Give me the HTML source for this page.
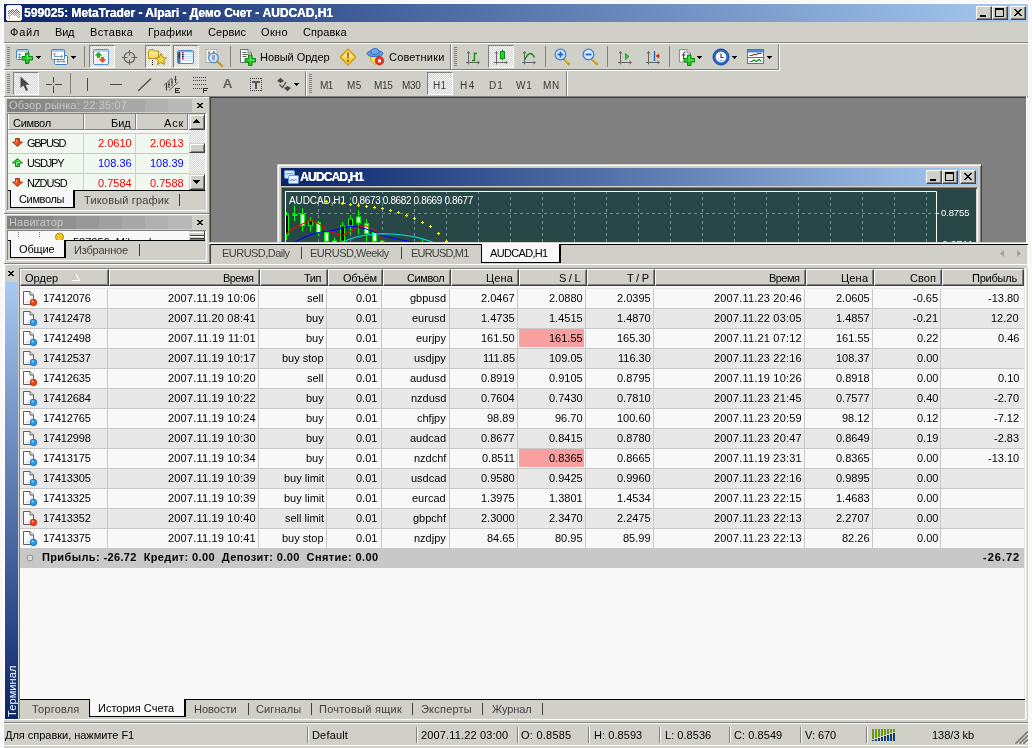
<!DOCTYPE html>
<html>
<head>
<meta charset="utf-8">
<title>MetaTrader</title>
<style>
*{box-sizing:border-box;margin:0;padding:0}
html,body{width:1032px;height:748px;overflow:hidden;background:#f8f8f8}
body{font-family:"Liberation Sans",sans-serif;font-size:11px;color:#000;position:relative}
.t{will-change:transform}
.a{position:absolute}
.t{position:absolute;white-space:pre;line-height:13px;height:13px}
.cb{position:absolute;width:16px;height:14px;background:#d0d0c8;border:1px solid;border-color:#fff #404040 #404040 #fff;box-shadow:inset -1px -1px 0 #808080}
.chk{background:repeating-conic-gradient(#fff 0% 25%,#d0d0c8 0% 50%) 0 0/2px 2px;border:1px solid;border-color:#808080 #fff #fff #808080}
.hd{position:absolute;height:16px;background:#d0d0c8;border:1px solid;border-color:#fff #404040 #404040 #fff;box-shadow:inset -1px -1px 0 #808080}
.g{color:#404040}

</style>
</head>
<body>
<div class="a " style="left:3px;top:3px;width:1025px;height:745px;background:#d0d0c8;border-left:1px solid #fff;border-top:1px solid #fff"></div>
<div class="a " style="left:4px;top:4px;width:1024px;height:18px;background:linear-gradient(90deg,#0a246a 0%,#a6caf0 100%)"></div>
<svg class="a" style="left:6px;top:5px" width="16" height="16" viewBox="0 0 16 16" shape-rendering="crispEdges"><rect x="0.500" y="0.500" width="15" height="15" rx="2" fill="#fbfaf6" stroke="#ece8dc"/><rect x="6" y="4" width="1" height="1" fill="#f02020"/><rect x="10" y="4" width="1" height="1" fill="#f02020"/><rect x="3" y="5" width="1" height="1" fill="#f02828"/><rect x="5" y="5" width="1" height="1" fill="#f02828"/><rect x="7" y="5" width="1" height="1" fill="#f02828"/><rect x="9" y="5" width="1" height="1" fill="#f02828"/><rect x="11" y="5" width="1" height="1" fill="#f02828"/><rect x="2" y="6" width="1" height="1" fill="#e83820"/><rect x="4" y="6" width="1" height="1" fill="#e83820"/><rect x="6" y="6" width="1" height="1" fill="#e83820"/><rect x="8" y="6" width="1" height="1" fill="#e83820"/><rect x="10" y="6" width="1" height="1" fill="#e83820"/><rect x="12" y="6" width="1" height="1" fill="#e83820"/><rect x="3" y="7" width="1" height="1" fill="#d05020"/><rect x="5" y="7" width="1" height="1" fill="#d05020"/><rect x="7" y="7" width="1" height="1" fill="#d05020"/><rect x="9" y="7" width="1" height="1" fill="#d05020"/><rect x="11" y="7" width="1" height="1" fill="#d05020"/><rect x="13" y="7" width="1" height="1" fill="#d05020"/><rect x="2" y="8" width="1" height="1" fill="#c87020"/><rect x="4" y="8" width="1" height="1" fill="#c87020"/><rect x="6" y="8" width="1" height="1" fill="#c87020"/><rect x="8" y="8" width="1" height="1" fill="#c87020"/><rect x="10" y="8" width="1" height="1" fill="#c87020"/><rect x="12" y="8" width="1" height="1" fill="#c87020"/><rect x="3" y="9" width="1" height="1" fill="#c89020"/><rect x="5" y="9" width="1" height="1" fill="#c89020"/><rect x="7" y="9" width="1" height="1" fill="#c89020"/><rect x="9" y="9" width="1" height="1" fill="#c89020"/><rect x="11" y="9" width="1" height="1" fill="#c89020"/><rect x="13" y="9" width="1" height="1" fill="#c89020"/><rect x="2" y="10" width="1" height="1" fill="#c0a020"/><rect x="4" y="10" width="1" height="1" fill="#c0a020"/><rect x="8" y="10" width="1" height="1" fill="#c0a020"/><rect x="10" y="10" width="1" height="1" fill="#c0a020"/><rect x="12" y="10" width="1" height="1" fill="#c0a020"/><rect x="3" y="11" width="1" height="1" fill="#80c030"/><rect x="11" y="11" width="1" height="1" fill="#80c030"/><rect x="13" y="11" width="1" height="1" fill="#80c030"/><rect x="12" y="12" width="1" height="1" fill="#70c030"/><rect x="3" y="13" width="1" height="1" fill="#70c030"/></svg>
<div class="t " style="left:23.5px;top:6px;letter-spacing:-0.024px;font-size:12px;font-weight:bold;color:#fff;line-height:14px;height:14px;text-shadow:.35px 0 0 #fff">599025: MetaTrader - Alpari - Демо Счет - AUDCAD,H1</div>
<div class="a cb" style="left:976px;top:6px;width:16px;height:14px;"></div>
<div class="a " style="left:980px;top:15px;width:6px;height:2px;background:#000"></div>
<div class="a cb" style="left:992px;top:6px;width:16px;height:14px;"></div>
<div class="a " style="left:995px;top:8px;width:9px;height:9px;border:1px solid #000;border-top:2px solid #000"></div>
<div class="a cb" style="left:1010px;top:6px;width:16px;height:14px;"></div>
<svg class="a" style="left:1014px;top:9px" width="8" height="7" viewBox="0 0 8 7" shape-rendering="crispEdges"><path d="M0 0H2L4 2.5L6 0H8L5 3.5L8 7H6L4 4.5L2 7H0L3 3.5Z" fill="#000"/></svg>
<div class="t " style="left:10.4px;top:26px;letter-spacing:0.819px;">Файл</div>
<div class="t " style="left:55.1px;top:26px;letter-spacing:-0.200px;">Вид</div>
<div class="t " style="left:90.1px;top:26px;letter-spacing:0.319px;">Вставка</div>
<div class="t " style="left:148.4px;top:26px;letter-spacing:0.129px;">Графики</div>
<div class="t " style="left:207.9px;top:26px;letter-spacing:0.066px;">Сервис</div>
<div class="t " style="left:261.1px;top:26px;letter-spacing:0.346px;">Окно</div>
<div class="t " style="left:303.0px;top:26px;letter-spacing:0.075px;">Справка</div>
<div class="a" style="left:4px;top:42px;width:1024px;height:1px;background:#808080"></div>
<div class="a" style="left:4px;top:43px;width:1024px;height:1px;background:#fff"></div>
<div class="a" style="left:4px;top:69px;width:775px;height:1px;background:#808080"></div>
<div class="a" style="left:4px;top:70px;width:776px;height:1px;background:#fff"></div>
<div class="a" style="left:4px;top:44px;width:1px;height:25px;background:#fff"></div>
<div class="a" style="left:450px;top:44px;width:1px;height:25px;background:#808080"></div>
<div class="a" style="left:451px;top:44px;width:1px;height:25px;background:#fff"></div>
<div class="a" style="left:778px;top:44px;width:1px;height:26px;background:#808080"></div>
<div class="a" style="left:779px;top:44px;width:1px;height:27px;background:#fff"></div>
<div class="a" style="left:4px;top:71px;width:1px;height:25px;background:#fff"></div>
<div class="a" style="left:305px;top:71px;width:1px;height:25px;background:#808080"></div>
<div class="a" style="left:306px;top:71px;width:1px;height:25px;background:#fff"></div>
<div class="a" style="left:566px;top:71px;width:1px;height:25px;background:#808080"></div>
<div class="a" style="left:567px;top:71px;width:1px;height:25px;background:#fff"></div>
<div class="a" style="left:4px;top:96px;width:1024px;height:1px;background:#808080"></div>
<div class="a" style="left:4px;top:97px;width:205px;height:1px;background:#fff"></div>
<div class="a " style="left:7px;top:47px;width:3px;height:1px;background:#808080"></div>
<div class="a " style="left:7px;top:49px;width:3px;height:1px;background:#808080"></div>
<div class="a " style="left:7px;top:51px;width:3px;height:1px;background:#808080"></div>
<div class="a " style="left:7px;top:53px;width:3px;height:1px;background:#808080"></div>
<div class="a " style="left:7px;top:55px;width:3px;height:1px;background:#808080"></div>
<div class="a " style="left:7px;top:57px;width:3px;height:1px;background:#808080"></div>
<div class="a " style="left:7px;top:59px;width:3px;height:1px;background:#808080"></div>
<div class="a " style="left:7px;top:61px;width:3px;height:1px;background:#808080"></div>
<div class="a " style="left:7px;top:63px;width:3px;height:1px;background:#808080"></div>
<div class="a " style="left:7px;top:65px;width:3px;height:1px;background:#808080"></div>
<div class="a " style="left:454px;top:47px;width:3px;height:1px;background:#808080"></div>
<div class="a " style="left:454px;top:49px;width:3px;height:1px;background:#808080"></div>
<div class="a " style="left:454px;top:51px;width:3px;height:1px;background:#808080"></div>
<div class="a " style="left:454px;top:53px;width:3px;height:1px;background:#808080"></div>
<div class="a " style="left:454px;top:55px;width:3px;height:1px;background:#808080"></div>
<div class="a " style="left:454px;top:57px;width:3px;height:1px;background:#808080"></div>
<div class="a " style="left:454px;top:59px;width:3px;height:1px;background:#808080"></div>
<div class="a " style="left:454px;top:61px;width:3px;height:1px;background:#808080"></div>
<div class="a " style="left:454px;top:63px;width:3px;height:1px;background:#808080"></div>
<div class="a " style="left:454px;top:65px;width:3px;height:1px;background:#808080"></div>
<div class="a " style="left:7px;top:74px;width:3px;height:1px;background:#808080"></div>
<div class="a " style="left:7px;top:76px;width:3px;height:1px;background:#808080"></div>
<div class="a " style="left:7px;top:78px;width:3px;height:1px;background:#808080"></div>
<div class="a " style="left:7px;top:80px;width:3px;height:1px;background:#808080"></div>
<div class="a " style="left:7px;top:82px;width:3px;height:1px;background:#808080"></div>
<div class="a " style="left:7px;top:84px;width:3px;height:1px;background:#808080"></div>
<div class="a " style="left:7px;top:86px;width:3px;height:1px;background:#808080"></div>
<div class="a " style="left:7px;top:88px;width:3px;height:1px;background:#808080"></div>
<div class="a " style="left:7px;top:90px;width:3px;height:1px;background:#808080"></div>
<div class="a " style="left:7px;top:92px;width:3px;height:1px;background:#808080"></div>
<div class="a " style="left:309px;top:74px;width:3px;height:1px;background:#808080"></div>
<div class="a " style="left:309px;top:76px;width:3px;height:1px;background:#808080"></div>
<div class="a " style="left:309px;top:78px;width:3px;height:1px;background:#808080"></div>
<div class="a " style="left:309px;top:80px;width:3px;height:1px;background:#808080"></div>
<div class="a " style="left:309px;top:82px;width:3px;height:1px;background:#808080"></div>
<div class="a " style="left:309px;top:84px;width:3px;height:1px;background:#808080"></div>
<div class="a " style="left:309px;top:86px;width:3px;height:1px;background:#808080"></div>
<div class="a " style="left:309px;top:88px;width:3px;height:1px;background:#808080"></div>
<div class="a " style="left:309px;top:90px;width:3px;height:1px;background:#808080"></div>
<div class="a " style="left:309px;top:92px;width:3px;height:1px;background:#808080"></div>
<svg class="a" style="left:15px;top:48px" width="20" height="18" viewBox="0 0 20 18" ><rect x="1.5" y="1.5" width="12" height="10" rx="1.2" fill="#fff" stroke="#3b82c8"/><rect x="2" y="2" width="11" height="2" fill="#a8ccf0"/>
<path d="M4.500 5.500V10.500M3 7L4.500 5.500L6 7M3 9L4.500 10.500L6 9" stroke="#7a98b8" fill="none"/><path d="M4.500 1H8V4.500H11.500V8H8V11.500H4.500V8H1V4.500H4.500Z" transform="translate(6,4)" fill="#28c828" stroke="#0a8a0a"/><path d="M5.500 2.500H7V5.500H10.500V7H5.500Z" transform="translate(6,4)" fill="#7df07d" opacity=".6"/></svg>
<svg class="a" style="left:36px;top:56px" width="5" height="3" viewBox="0 0 5 3" shape-rendering="crispEdges"><path d="M0 0H5V1H4V2H3V3H2V2H1V1H0Z" fill="#000"/></svg>
<svg class="a" style="left:50px;top:48px" width="20" height="18" viewBox="0 0 20 18" ><rect x="4.5" y="7.5" width="13" height="9" rx="1.2" fill="#fff" stroke="#3b82c8"/><path d="M7 13.5H15M7 13.5l1.5-1.5M7 13.5l1.5 1.5M15 13.5l-1.5-1.5M15 13.5l-1.5 1.5" stroke="#7a98b8" fill="none"/>
<rect x="1.5" y="1.5" width="13" height="10" rx="1.2" fill="#fff" stroke="#3b82c8"/><rect x="2" y="2" width="12" height="2" fill="#a8ccf0"/>
<path d="M4.500 5V9.5M3 6.5L4.5 5L6 6.500M4 8.500H12.500M11 7L12.500 8.500L11 10" stroke="#7a98b8" fill="none"/></svg>
<svg class="a" style="left:71px;top:56px" width="5" height="3" viewBox="0 0 5 3" shape-rendering="crispEdges"><path d="M0 0H5V1H4V2H3V3H2V2H1V1H0Z" fill="#000"/></svg>
<div class="a" style="left:84px;top:46px;width:1px;height:21px;background:#808080"></div>
<div class="a chk" style="left:89px;top:45px;width:26px;height:23px;"></div>
<svg class="a" style="left:93px;top:49px" width="17" height="16" viewBox="0 0 17 16" ><rect x="0.5" y="0.5" width="15" height="15" rx="1.5" fill="#f8f8f8" stroke="#4a90e0"/><rect x="1" y="1" width="14" height="2" fill="#b8d4f4"/>
<path d="M10 5.500H14M10 7.500H14M2 10.500H6M2 12.500H6" stroke="#e4e4e4"/>
<path d="M5.500 3.200L8.700 6.300H6.800V8.500H4.200V6.300H2.300Z" fill="#20b020" stroke="#108010" stroke-width=".5"/>
<path d="M9.500 13.600L6.300 10.500H8.200V8.300H10.800V10.500H12.700Z" fill="#f05020" stroke="#c03010" stroke-width=".5"/></svg>
<svg class="a" style="left:121px;top:49px" width="18" height="17" viewBox="0 0 18 17" ><circle cx="8.5" cy="8.5" r="5.300" fill="none" stroke="#606060" stroke-width="1.100"/><path d="M8.500 1V6.500M8.500 10.500V16M1 8.500H6.500M10.500 8.500H16.500" stroke="#606060" stroke-width="1.100"/></svg>
<div class="a chk" style="left:145px;top:45px;width:26px;height:23px;"></div>
<svg class="a" style="left:147px;top:48px" width="21" height="18" viewBox="0 0 21 18" ><path d="M1.500 3.500Q1.500 1.500 3.500 1.500H6L7.500 3H11.500V10.500H1.500Z" fill="#f4dc70" stroke="#b8901c"/><path d="M2 5.500H11" stroke="#fbeea8" stroke-width="2"/>
<path d="M5.500 12V17" stroke="#000" stroke-dasharray="1 1"/>
<path d="M14 5.500L15.800 9.500L19.500 10L16.700 12.600L17.500 16.500L14 14.500L10.500 16.500L11.300 12.600L8.500 10L12.200 9.500Z" fill="#f4d840" stroke="#b08818"/></svg>
<div class="a chk" style="left:173px;top:45px;width:26px;height:23px;"></div>
<svg class="a" style="left:177px;top:50px" width="17" height="14" viewBox="0 0 17 14" ><rect x="0.500" y="0.500" width="16" height="13" rx="1.500" fill="#fff" stroke="#4888d0"/><rect x="1" y="1" width="15" height="1.500" fill="#8ab8ec"/><rect x="1" y="2" width="2.500" height="11" fill="#4878b8"/><rect x="1.500" y="2.500" width="1.500" height="6" fill="#203858"/>
<path d="M5 4.500H16M5 6.500H16M5 8.500H16M5 10.500H16" stroke="#c0d8f4"/>
<rect x="5" y="2" width="1.500" height="1.500" fill="#f00"/><rect x="5" y="8" width="1.500" height="1.500" fill="#f00"/><rect x="5" y="4" width="1.500" height="1.500" fill="#000"/><rect x="5" y="6" width="1.500" height="1.500" fill="#000"/></svg>
<svg class="a" style="left:205px;top:48px" width="19" height="20" viewBox="0 0 19 20" ><rect x="1" y="1.500" width="11" height="13" fill="#f4f2ec" stroke="#b8b4a8"/><path d="M4 3V11M8.500 3V11M3 5H5M8 4H10" stroke="#506080" stroke-width=".8"/>
<path d="M12 13L17 18" stroke="#c89820" stroke-width="2.400" stroke-linecap="round"/><circle cx="8.500" cy="10" r="4.800" fill="#d0e4f8" fill-opacity=".85" stroke="#4a88d8" stroke-width="1.200"/><rect x="7" y="7" width="3" height="5" fill="#90a8c0"/></svg>
<div class="a" style="left:230px;top:46px;width:1px;height:21px;background:#808080"></div>
<svg class="a" style="left:240px;top:48px" width="17" height="19" viewBox="0 0 17 19" ><path d="M0.500 1.500H8L11.500 5V14.500H0.500Z" fill="#fbfbf8" stroke="#707070"/><path d="M8 1.500V5H11.500" fill="#e0e0e0" stroke="#707070"/><path d="M2.500 4.500H6.500M2.500 6.500H8.500M2.500 8.500H6.500" stroke="#606060"/><path d="M4.500 1H8V4.500H11.500V8H8V11.500H4.500V8H1V4.500H4.500Z" transform="translate(4,6)" fill="#28c828" stroke="#0a8a0a"/><path d="M5.500 2.500H7V5.500H10.500V7H5.500Z" transform="translate(4,6)" fill="#7df07d" opacity=".6"/></svg>
<div class="t " style="left:260.1px;top:51px;letter-spacing:-0.049px;">Новый Ордер</div>
<svg class="a" style="left:339px;top:48px" width="18" height="18" viewBox="0 0 18 18" ><path d="M9 1L16.800 9L9 17L1.200 9Z" fill="#f8d840" stroke="#c89810" stroke-width="1.200" stroke-linejoin="round"/><path d="M9 3L14.500 9H3.500Z" fill="#fdf0a0" opacity=".8"/><path d="M8.200 4.500H9.800L9.500 10.500H8.500Z" fill="#9c3010"/><circle cx="9" cy="12.800" r="1.100" fill="#9c3010"/></svg>
<svg class="a" style="left:366px;top:47px" width="19" height="19" viewBox="0 0 19 19" ><path d="M4 9H14Q14 14 9 17.500Q4 14 4 9Z" fill="#f8e060" stroke="#c8a020"/><ellipse cx="9" cy="6.500" rx="8" ry="3.200" fill="#5a98e0" stroke="#3a70c0"/><ellipse cx="9" cy="4.500" rx="4" ry="3" fill="#6aa8ec" stroke="#3a70c0"/>
<circle cx="13.500" cy="13.800" r="4.300" fill="#e83018" stroke="#b02010" stroke-width=".6"/><rect x="12" y="12.300" width="3" height="3" fill="#fff"/></svg>
<div class="t " style="left:389.2px;top:51px;letter-spacing:0.194px;">Советники</div>
<svg class="a" style="left:465px;top:49px" width="16" height="17" viewBox="0 0 16 17" ><path d="M3.500 2.500V15.500M1 13.500H14M2 4.500L3.500 2.500L5 4.500M12.500 12L14.500 13.500L12.500 15" stroke="#646464" fill="none" stroke-width="1"/><path d="M9.500 3.500V12M7 11.500H9.500M9.500 4.500H12" stroke="#109010" stroke-width="1.400" fill="none"/></svg>
<div class="a chk" style="left:488px;top:45px;width:26px;height:23px;"></div>
<svg class="a" style="left:493px;top:48px" width="16" height="18" viewBox="0 0 16 18" ><g transform="translate(0,1)"><path d="M3.500 2.500V15.500M1 13.500H14M2 4.500L3.500 2.500L5 4.500M12.500 12L14.500 13.500L12.500 15" stroke="#646464" fill="none" stroke-width="1"/></g><path d="M9.500 1.500V12.500" stroke="#109010"/><rect x="7.500" y="3.500" width="4" height="7" fill="#30d030" stroke="#109010"/></svg>
<svg class="a" style="left:521px;top:49px" width="16" height="17" viewBox="0 0 16 17" ><path d="M3.500 2.500V15.500M1 13.500H14M2 4.500L3.500 2.500L5 4.500M12.500 12L14.500 13.500L12.500 15" stroke="#646464" fill="none" stroke-width="1"/><path d="M3.500 11Q7 4 9.500 4.500T13.500 8.500" stroke="#109010" stroke-width="1.400" fill="none"/></svg>
<div class="a" style="left:545px;top:46px;width:1px;height:21px;background:#808080"></div>
<svg class="a" style="left:553.5px;top:48px" width="18" height="18" viewBox="0 0 18 18" ><path d="M9.500 10.500L15 16" stroke="#c8a020" stroke-width="2.600" stroke-linecap="round"/><path d="M10 10L14.500 14.500" stroke="#f4e080" stroke-width=".8"/><circle cx="6.500" cy="6.500" r="5.300" fill="#d4e8fc" stroke="#3a80d8" stroke-width="1.300"/><path d="M3.500 6.500H9.500" stroke="#2a68c0" stroke-width="1.800"/><path d="M6.500 3.500V9.500" stroke="#2a68c0" stroke-width="1.800"/></svg>
<svg class="a" style="left:581.5px;top:48px" width="18" height="18" viewBox="0 0 18 18" ><path d="M9.500 10.500L15 16" stroke="#c8a020" stroke-width="2.600" stroke-linecap="round"/><path d="M10 10L14.500 14.500" stroke="#f4e080" stroke-width=".8"/><circle cx="6.500" cy="6.500" r="5.300" fill="#d4e8fc" stroke="#3a80d8" stroke-width="1.300"/><path d="M3.500 6.500H9.500" stroke="#2a68c0" stroke-width="1.800"/></svg>
<div class="a" style="left:607px;top:46px;width:1px;height:21px;background:#808080"></div>
<svg class="a" style="left:617px;top:49px" width="16" height="17" viewBox="0 0 16 17" ><path d="M3.500 2.500V15.500M1 13.500H14M2 4.500L3.500 2.500L5 4.500M12.500 12L14.500 13.500L12.500 15" stroke="#646464" fill="none" stroke-width="1"/><path d="M8.500 4.500L12 7.500L8.500 10.500Z" fill="#30d030" stroke="#109010" stroke-width=".8"/></svg>
<svg class="a" style="left:645px;top:49px" width="16" height="17" viewBox="0 0 16 17" ><path d="M3.500 2.500V15.500M1 13.500H14M2 4.500L3.500 2.500L5 4.500M12.500 12L14.500 13.500L12.500 15" stroke="#646464" fill="none" stroke-width="1"/><path d="M9.500 2V12" stroke="#2068b0" stroke-width="1.300"/><path d="M10.500 7L14 4.500V9.500Z" fill="#e03010"/><path d="M12 7H15" stroke="#e03010"/></svg>
<div class="a" style="left:669px;top:46px;width:1px;height:21px;background:#808080"></div>
<svg class="a" style="left:679px;top:48px" width="17" height="19" viewBox="0 0 17 19" ><path d="M0.500 1.500H8L11.500 5V14H0.500Z" fill="#f8f8f4" stroke="#909090"/><path d="M8 1.500V5H11.500" fill="#e0e0e0" stroke="#909090"/><path d="M6.500 4Q4.500 3.500 4.500 6V11M3 7H6.500" stroke="#404040" fill="none"/><path d="M4.500 1H8V4.500H11.500V8H8V11.500H4.500V8H1V4.500H4.500Z" transform="translate(4,6)" fill="#28c828" stroke="#0a8a0a"/><path d="M5.500 2.500H7V5.500H10.500V7H5.500Z" transform="translate(4,6)" fill="#7df07d" opacity=".6"/></svg>
<svg class="a" style="left:697px;top:56px" width="5" height="3" viewBox="0 0 5 3" shape-rendering="crispEdges"><path d="M0 0H5V1H4V2H3V3H2V2H1V1H0Z" fill="#000"/></svg>
<svg class="a" style="left:712px;top:48px" width="18" height="18" viewBox="0 0 18 18" ><circle cx="9" cy="9" r="6.800" fill="#f4f8fc" stroke="#2464c4" stroke-width="2.800"/><circle cx="9" cy="9" r="8.100" fill="none" stroke="#184494" stroke-width=".7"/><path d="M9 5.500V9.500H11.500" stroke="#404040" fill="none" stroke-width="1.100"/><path d="M7.500 12.500H10.500" stroke="#80a8e0"/></svg>
<svg class="a" style="left:732px;top:56px" width="5" height="3" viewBox="0 0 5 3" shape-rendering="crispEdges"><path d="M0 0H5V1H4V2H3V3H2V2H1V1H0Z" fill="#000"/></svg>
<svg class="a" style="left:747px;top:49px" width="18" height="16" viewBox="0 0 18 16" ><rect x="0.500" y="0.500" width="16" height="14" fill="#fff" stroke="#3878c8"/><rect x="1" y="1" width="15" height="2.500" fill="#4a88d8"/><path d="M1 8.500H16" stroke="#3878c8"/>
<path d="M2.500 6.500H5L7 5.500H9.500L11 4.500H14.500" stroke="#a02810" fill="none" stroke-width="1.200"/><path d="M2.500 12.500H5L7 11L9.500 12.500L12 10.500L14.500 12.500" stroke="#109010" fill="none" stroke-width="1.200"/></svg>
<svg class="a" style="left:767px;top:56px" width="5" height="3" viewBox="0 0 5 3" shape-rendering="crispEdges"><path d="M0 0H5V1H4V2H3V3H2V2H1V1H0Z" fill="#000"/></svg>
<div class="a chk" style="left:13px;top:72px;width:26px;height:23px;"></div>
<svg class="a" style="left:19px;top:75px" width="12" height="18" viewBox="0 0 12 18" ><path d="M1.500 1.500V13L4.500 10.500L7 16L9 15L6.500 9.800H10.500Z" fill="#484848"/></svg>
<div class="a " style="left:46px;top:84px;width:6px;height:1px;background:#484848"></div>
<div class="a " style="left:55px;top:84px;width:7px;height:1px;background:#484848"></div>
<div class="a " style="left:53px;top:77px;width:1px;height:6px;background:#484848"></div>
<div class="a " style="left:53px;top:86px;width:1px;height:7px;background:#484848"></div>
<div class="a " style="left:53px;top:84px;width:1px;height:1px;background:#909090"></div>
<div class="a" style="left:70px;top:73px;width:1px;height:21px;background:#808080"></div>
<div class="a " style="left:87px;top:78px;width:1px;height:13px;background:#484848"></div>
<div class="a " style="left:110px;top:84px;width:12px;height:1px;background:#484848"></div>
<svg class="a" style="left:137px;top:77px" width="15" height="15" viewBox="0 0 15 15" ><path d="M1 14L14 1.500" stroke="#484848" stroke-width="1.100"/></svg>
<svg class="a" style="left:162px;top:75px" width="20" height="20" viewBox="0 0 20 20" ><path d="M1.500 10.800L10 2.800M7 15.600L16 7.200" stroke="#585858" stroke-width=".9"/><path d="M4.500 8V15.500M7 6.500V13M10 4V11M13.500 1V8M3.500 12H5.500M6 9.500H8M9 7H11M12.500 4.500H14.500" stroke="#404040" stroke-width="1.100"/></svg>
<svg class="a" style="left:175px;top:88px" width="5" height="6" viewBox="0 0 5 6" shape-rendering="crispEdges"><path d="M0 0H5V1H1V2H4V3H1V4H5V5H0Z" fill="#303030"/></svg>
<svg class="a" style="left:193px;top:77px" width="14" height="12" viewBox="0 0 14 12" shape-rendering="crispEdges"><path d="M0 0h1v1h-1zM2 0h1v1h-1zM4 0h1v1h-1zM6 0h1v1h-1zM8 0h1v1h-1zM10 0h1v1h-1zM12 0h1v1h-1zM0 3h1v1h-1zM2 3h1v1h-1zM4 3h1v1h-1zM6 3h1v1h-1zM8 3h1v1h-1zM10 3h1v1h-1zM12 3h1v1h-1zM0 7h1v1h-1zM2 7h1v1h-1zM4 7h1v1h-1zM6 7h1v1h-1zM8 7h1v1h-1zM10 7h1v1h-1zM12 7h1v1h-1zM0 11h1v1h-1zM2 11h1v1h-1zM4 11h1v1h-1zM6 11h1v1h-1zM8 11h1v1h-1z" fill="#404040"/></svg>
<svg class="a" style="left:203px;top:88px" width="5" height="6" viewBox="0 0 5 6" shape-rendering="crispEdges"><path d="M0 0H5V1H1V2H4V3H1V5H0Z" fill="#303030"/></svg>
<div class="t " style="left:223.3px;top:77px;color:#5c5c5c;line-height:14px;height:14px;font-size:12.5px;text-shadow:.7px 0 0 #5c5c5c">A</div>
<svg class="a" style="left:250px;top:78px" width="12" height="13" viewBox="0 0 12 13" shape-rendering="crispEdges"><path d="M0 0h1v1h-1zM0 12h1v1h-1zM2 0h1v1h-1zM2 12h1v1h-1zM4 0h1v1h-1zM4 12h1v1h-1zM6 0h1v1h-1zM6 12h1v1h-1zM8 0h1v1h-1zM8 12h1v1h-1zM10 0h1v1h-1zM10 12h1v1h-1zM0 2h1v1h-1zM11 2h1v1h-1zM0 4h1v1h-1zM11 4h1v1h-1zM0 6h1v1h-1zM11 6h1v1h-1zM0 8h1v1h-1zM11 8h1v1h-1zM0 10h1v1h-1zM11 10h1v1h-1zM11 0h1v1h-1zM11 12h1v1h-1z" fill="#404040"/><path d="M2 3H10V5H7V11H5V5H2Z" fill="#585858"/></svg>
<svg class="a" style="left:276px;top:77px" width="16" height="15" viewBox="0 0 16 15" ><path d="M4.500 0.800L8.200 4.300H0.800Z M1.500 4.300H7.500L4.500 6Z" fill="#484848"/><path d="M11.500 14.200L15.200 10.700H7.800ZM8.500 10.700H14.500L11.500 9Z" fill="#484848"/><path d="M3.500 7.500L6.500 10.500L10 5" stroke="#484848" fill="none" stroke-width="1.300"/></svg>
<svg class="a" style="left:294px;top:83px" width="5" height="3" viewBox="0 0 5 3" shape-rendering="crispEdges"><path d="M0 0H5V1H4V2H3V3H2V2H1V1H0Z" fill="#000"/></svg>
<div class="a chk" style="left:427px;top:72px;width:26px;height:23px;"></div>
<div class="t " style="left:320.2px;top:78.6px;letter-spacing:-0.492px;font-size:10px;color:#383838">M1</div>
<div class="t " style="left:347.4px;top:78.6px;letter-spacing:0.308px;font-size:10px;color:#383838">M5</div>
<div class="t " style="left:374.4px;top:78.6px;letter-spacing:-0.377px;font-size:10px;color:#383838">M15</div>
<div class="t " style="left:402.4px;top:78.6px;letter-spacing:-0.377px;font-size:10px;color:#383838">M30</div>
<div class="t " style="left:433.1px;top:78.6px;letter-spacing:0.217px;font-size:10px;color:#383838">H1</div>
<div class="t " style="left:459.9px;top:78.6px;letter-spacing:1.617px;font-size:10px;color:#383838">H4</div>
<div class="t " style="left:488.9px;top:78.6px;letter-spacing:0.917px;font-size:10px;color:#383838">D1</div>
<div class="t " style="left:516.1px;top:78.6px;letter-spacing:0.900px;font-size:10px;color:#383838">W1</div>
<div class="t " style="left:543.0px;top:78.6px;letter-spacing:0.648px;font-size:10px;color:#383838">MN</div>
<div class="a" style="left:4px;top:98px;width:1px;height:115px;background:#fff"></div>
<div class="a " style="left:7px;top:99px;width:185px;height:13px;background:linear-gradient(90deg,#808080 0px,#808080 23px,#888888 23px,#888888 46px,#909090 46px,#909090 69px,#989898 69px,#989898 92px,#a0a0a0 92px,#a0a0a0 115px,#a8a8a8 115px,#a8a8a8 138px,#b0b0b0 138px,#b0b0b0 161px,#b8b8b8 161px,#b8b8b8 185px)"></div>
<div class="t " style="left:8.8px;top:99px;letter-spacing:0.139px;color:#c8c8c8">Обзор рынка: 22:35:07</div>
<svg class="a" style="left:197px;top:103px" width="6" height="5" viewBox="0 0 6 5" ><path d="M0 0h2v1h-2zM4 0h2v1h-2zM1 1h4v1h-4zM2 2h2v1h-2zM1 3h4v1h-4zM0 4h2v1h-2zM4 4h2v1h-2z" fill="#000" shape-rendering="crispEdges"/></svg>
<div class="a" style="left:7px;top:113px;width:1px;height:97px;background:#808080"></div>
<div class="a" style="left:7px;top:113px;width:200px;height:1px;background:#808080"></div>
<div class="a" style="left:206px;top:113px;width:1px;height:98px;background:#fff"></div>
<div class="a" style="left:7px;top:210px;width:200px;height:1px;background:#fff"></div>
<div class="a " style="left:8px;top:114px;width:198px;height:76px;background:#f8f8f8"></div>
<div class="a " style="left:8px;top:114px;width:76px;height:16px;background:#d0d0c8;border-left:1px solid #fff;border-right:1px solid #808080;border-bottom:1px solid #808080"></div>
<div class="a " style="left:84px;top:114px;width:52px;height:16px;background:#d0d0c8;border-left:1px solid #fff;border-right:1px solid #808080;border-bottom:1px solid #808080"></div>
<div class="a " style="left:136px;top:114px;width:52px;height:16px;background:#d0d0c8;border-left:1px solid #fff;border-right:1px solid #808080;border-bottom:1px solid #808080"></div>
<div class="t " style="left:12.8px;top:117px;letter-spacing:-0.313px;">Символ</div>
<div class="t " style="left:111.0px;top:117px;letter-spacing:-0.091px;">Бид</div>
<div class="t " style="left:163.9px;top:117px;letter-spacing:0.825px;">Аск</div>
<div class="a " style="left:8px;top:133px;width:181px;height:57px;background:#f0f8f0"></div>
<div class="a" style="left:8px;top:153px;width:181px;height:1px;background:#c8c8c8"></div>
<div class="a" style="left:8px;top:173px;width:181px;height:1px;background:#c8c8c8"></div>
<div class="a" style="left:8px;top:133px;width:181px;height:1px;background:#c8c8c8"></div>
<div class="a" style="left:83px;top:133px;width:1px;height:57px;background:#d0d0d0"></div>
<div class="a" style="left:135px;top:133px;width:1px;height:57px;background:#d0d0d0"></div>
<svg class="a" style="left:12px;top:138px" width="11" height="9" viewBox="0 0 11 9" ><path d="M5.500 8.500L10.500 4H7.500V0.500H3.500V4H0.500Z" fill="#f04818" stroke="#a82808" stroke-width=".9"/><path d="M4.500 1.500V4.500H3" fill="none" stroke="#ffb090" stroke-width=".8"/></svg>
<div class="t " style="left:27.0px;top:137px;letter-spacing:-1.411px;">GBPUSD</div>
<div class="t " style="right:900px;top:137px;color:#f00">2.0610</div>
<div class="t " style="right:848px;top:137px;color:#f00">2.0613</div>
<svg class="a" style="left:12px;top:158px" width="11" height="9" viewBox="0 0 11 9" ><path d="M5.500 0.500L10.500 5H7.500V8.500H3.500V5H0.500Z" fill="#28c028" stroke="#0a7a0a" stroke-width=".9"/><path d="M5.500 2L8 4.500H4.500V7.500" fill="none" stroke="#a0f0a0" stroke-width=".8"/></svg>
<div class="t " style="left:27.0px;top:157px;letter-spacing:-1.160px;">USDJPY</div>
<div class="t " style="right:900px;top:157px;color:#00f">108.36</div>
<div class="t " style="right:848px;top:157px;color:#00f">108.39</div>
<svg class="a" style="left:12px;top:178px" width="11" height="9" viewBox="0 0 11 9" ><path d="M5.500 8.500L10.500 4H7.500V0.500H3.500V4H0.500Z" fill="#f04818" stroke="#a82808" stroke-width=".9"/><path d="M4.500 1.500V4.500H3" fill="none" stroke="#ffb090" stroke-width=".8"/></svg>
<div class="t " style="left:27.0px;top:177px;letter-spacing:-1.026px;">NZDUSD</div>
<div class="t " style="right:900px;top:177px;color:#f00">0.7584</div>
<div class="t " style="right:848px;top:177px;color:#f00">0.7588</div>
<div class="a " style="left:189px;top:114px;width:16px;height:76px;background:repeating-conic-gradient(#fff 0% 25%,#d0d0c8 0% 50%) 0 0/2px 2px"></div>
<div class="a " style="left:189px;top:114px;width:16px;height:16px;background:#d0d0c8;border:1px solid;border-color:#d0d0c8 #404040 #404040 #d0d0c8;box-shadow:inset 1px 1px 0 #fff,inset -1px -1px 0 #808080"></div>
<svg class="a" style="left:193px;top:119px" width="7" height="4" viewBox="0 0 7 4" shape-rendering="crispEdges"><path d="M3 0H4V1H5V2H6V3H7V4H0V3H1V2H2V1H3Z" fill="#000"/></svg>
<div class="a " style="left:189px;top:143px;width:16px;height:10px;background:#d0d0c8;border:1px solid;border-color:#d0d0c8 #404040 #404040 #d0d0c8;box-shadow:inset 1px 1px 0 #fff,inset -1px -1px 0 #808080"></div>
<div class="a " style="left:189px;top:174px;width:16px;height:16px;background:#d0d0c8;border:1px solid;border-color:#d0d0c8 #404040 #404040 #d0d0c8;box-shadow:inset 1px 1px 0 #fff,inset -1px -1px 0 #808080"></div>
<svg class="a" style="left:193px;top:180px" width="7" height="4" viewBox="0 0 7 4" shape-rendering="crispEdges"><path d="M0 0H7V1H6V2H5V3H4V4H3V3H2V2H1V1H0Z" fill="#000"/></svg>
<div class="a" style="left:8px;top:190px;width:197px;height:1px;background:#000"></div>
<div class="a " style="left:8px;top:191px;width:198px;height:19px;background:#d0d0c8"></div>
<div class="a " style="left:10px;top:190px;width:65px;height:18px;background:#f8f8f8;border:1px solid #000;border-top:none;border-right:2px solid #000"></div>
<div class="a " style="left:11px;top:190px;width:62px;height:1px;background:#f8f8f8"></div>
<div class="t " style="left:19.0px;top:193px;letter-spacing:-0.345px;">Символы</div>
<div class="t " style="left:83.7px;top:194px;letter-spacing:0.174px;color:#404040">Тиковый график</div>
<div class="a" style="left:179px;top:194px;width:1px;height:12px;background:#404040"></div>
<div class="a" style="left:4px;top:213px;width:206px;height:1px;background:#808080"></div>
<div class="a" style="left:4px;top:214px;width:206px;height:1px;background:#fff"></div>
<div class="a" style="left:4px;top:215px;width:1px;height:48px;background:#fff"></div>
<div class="a " style="left:7px;top:216px;width:185px;height:13px;background:linear-gradient(90deg,#808080 0px,#808080 23px,#888888 23px,#888888 46px,#909090 46px,#909090 69px,#989898 69px,#989898 92px,#a0a0a0 92px,#a0a0a0 115px,#a8a8a8 115px,#a8a8a8 138px,#b0b0b0 138px,#b0b0b0 161px,#b8b8b8 161px,#b8b8b8 185px)"></div>
<div class="t " style="left:8.9px;top:216px;letter-spacing:0.169px;color:#c8c8c8">Навигатор</div>
<svg class="a" style="left:197px;top:220px" width="6" height="5" viewBox="0 0 6 5" ><path d="M0 0h2v1h-2zM4 0h2v1h-2zM1 1h4v1h-4zM2 2h2v1h-2zM1 3h4v1h-4zM0 4h2v1h-2zM4 4h2v1h-2z" fill="#000" shape-rendering="crispEdges"/></svg>
<div class="a" style="left:7px;top:230px;width:1px;height:30px;background:#808080"></div>
<div class="a" style="left:7px;top:230px;width:200px;height:1px;background:#808080"></div>
<div class="a" style="left:206px;top:230px;width:1px;height:31px;background:#fff"></div>
<div class="a" style="left:7px;top:260px;width:200px;height:1px;background:#fff"></div>
<div class="a " style="left:8px;top:231px;width:198px;height:9px;background:#f8f8f8;overflow:hidden"><div class="t" style="left:65px;top:5px">587056: Mikandus</div></div>
<div class="a " style="left:18px;top:232px;width:1px;height:6px;background:repeating-linear-gradient(180deg,#808080 0 1px,transparent 1px 2px)"></div>
<div class="a " style="left:39px;top:232px;width:1px;height:6px;background:repeating-linear-gradient(180deg,#808080 0 1px,transparent 1px 2px)"></div>
<svg class="a" style="left:55px;top:231px" width="9" height="9" viewBox="0 0 9 9" ><circle cx="4.500" cy="6" r="4" fill="#f0c820" stroke="#b08810"/></svg>
<div class="a " style="left:189px;top:231px;width:16px;height:9px;background:#d0d0c8"></div>
<div class="a" style="left:189px;top:232px;width:15px;height:1px;background:#fff"></div>
<div class="a" style="left:190px;top:235px;width:15px;height:1px;background:#404040"></div>
<div class="a" style="left:189px;top:236px;width:15px;height:1px;background:#fff"></div>
<div class="a" style="left:190px;top:238px;width:15px;height:1px;background:#404040"></div>
<div class="a" style="left:190px;top:239px;width:15px;height:1px;background:#808080"></div>
<div class="a" style="left:204px;top:231px;width:1px;height:9px;background:#404040"></div>
<div class="a" style="left:8px;top:240px;width:197px;height:1px;background:#000"></div>
<div class="a " style="left:8px;top:241px;width:198px;height:19px;background:#d0d0c8"></div>
<div class="a " style="left:10px;top:240px;width:56px;height:18px;background:#f8f8f8;border:1px solid #000;border-top:none;border-right:2px solid #000"></div>
<div class="a " style="left:11px;top:240px;width:53px;height:1px;background:#f8f8f8"></div>
<div class="t " style="left:19.0px;top:243px;letter-spacing:-0.142px;">Общие</div>
<div class="t " style="left:74.4px;top:244px;letter-spacing:-0.206px;color:#404040">Избранное</div>
<div class="a" style="left:139px;top:244px;width:1px;height:12px;background:#404040"></div>
<div class="a " style="left:209px;top:96px;width:817px;height:146px;background:#808080;border-top:1px solid #808080;border-left:1px solid #808080"></div>
<div class="a" style="left:210px;top:97px;width:816px;height:1px;background:#404040"></div>
<div class="a" style="left:210px;top:97px;width:1px;height:145px;background:#404040"></div>
<div class="a" style="left:1026px;top:96px;width:1px;height:148px;background:#fff"></div>
<div class="a" style="left:1027px;top:98px;width:1px;height:170px;background:#f4f4f2"></div>
<div class="a" style="left:209px;top:242px;width:817px;height:1px;background:#d0d0c8"></div>
<div class="a" style="left:209px;top:243px;width:819px;height:1px;background:#fff"></div>
<div class="a " style="left:277px;top:164px;width:705px;height:78px;overflow:hidden">
<div class="a" style="left:0;top:0;width:705px;height:120px;background:#d0d0c8;border:1px solid;border-color:#d0d0c8 #404040 #404040 #d0d0c8;box-shadow:inset 1px 1px 0 #fff,inset -1px -1px 0 #808080"></div>
<div class="a" style="left:4px;top:4px;width:697px;height:18px;background:linear-gradient(90deg,#0a246a 0%,#a6caf0 100%)"></div>
<svg class="a" style="left:6px;top:5px" width="16" height="16" viewBox="0 0 16 16"><rect x="1.500" y="1.500" width="10" height="8" rx="1" fill="#d8e8fc" stroke="#5a98e8" stroke-dasharray="1 .6"/><rect x="5.500" y="6.500" width="10" height="8" rx="1" fill="#e8f0fc" stroke="#5a98e8"/><path d="M3 4.500L4 5.500L5.500 4L7 5.500L8.500 4L10 5" stroke="#3a70c0" fill="none" stroke-width=".8"/><path d="M7 10.500L8 12L9.500 10L11 12L12.500 10L14 11.500" stroke="#3a70c0" fill="none" stroke-width=".8"/></svg>
<div class="a" style="left:4px;top:23px;width:697px;height:100px;background:#284848;border:1px solid;border-color:#808080 #fff #fff #808080;box-shadow:inset 1px 1px 0 #404040,inset -1px -1px 0 #d0d0c8"></div>
</div>
<div class="t " style="left:300.4px;top:170px;letter-spacing:-0.821px;font-size:12px;font-weight:bold;color:#fff;line-height:14px;height:14px;text-shadow:.35px 0 0 #fff">AUDCAD,H1</div>
<div class="a cb" style="left:926px;top:170px;width:16px;height:14px;"></div>
<div class="a " style="left:930px;top:179px;width:6px;height:2px;background:#000"></div>
<div class="a cb" style="left:942px;top:170px;width:16px;height:14px;"></div>
<div class="a " style="left:945px;top:172px;width:9px;height:9px;border:1px solid #000;border-top:2px solid #000"></div>
<div class="a cb" style="left:960px;top:170px;width:16px;height:14px;"></div>
<svg class="a" style="left:964px;top:173px" width="8" height="7" viewBox="0 0 8 7" shape-rendering="crispEdges"><path d="M0 0H2L4 2.5L6 0H8L5 3.5L8 7H6L4 4.5L2 7H0L3 3.5Z" fill="#000"/></svg>
<svg class="a" style="left:281px;top:188px" width="696" height="54" viewBox="0 0 696 54" ><path d="M37.5 4V56" stroke="#6e8e9a" stroke-dasharray="3 3" stroke-dashoffset="1"/><path d="M69.5 4V56" stroke="#6e8e9a" stroke-dasharray="3 3" stroke-dashoffset="1"/><path d="M101.5 4V56" stroke="#6e8e9a" stroke-dasharray="3 3" stroke-dashoffset="1"/><path d="M133.5 4V56" stroke="#6e8e9a" stroke-dasharray="3 3" stroke-dashoffset="1"/><path d="M165.5 4V56" stroke="#6e8e9a" stroke-dasharray="3 3" stroke-dashoffset="1"/><path d="M197.5 4V56" stroke="#6e8e9a" stroke-dasharray="3 3" stroke-dashoffset="1"/><path d="M229.5 4V56" stroke="#6e8e9a" stroke-dasharray="3 3" stroke-dashoffset="1"/><path d="M261.5 4V56" stroke="#6e8e9a" stroke-dasharray="3 3" stroke-dashoffset="1"/><path d="M293.5 4V56" stroke="#6e8e9a" stroke-dasharray="3 3" stroke-dashoffset="1"/><path d="M325.5 4V56" stroke="#6e8e9a" stroke-dasharray="3 3" stroke-dashoffset="1"/><path d="M357.5 4V56" stroke="#6e8e9a" stroke-dasharray="3 3" stroke-dashoffset="1"/><path d="M389.5 4V56" stroke="#6e8e9a" stroke-dasharray="3 3" stroke-dashoffset="1"/><path d="M421.5 4V56" stroke="#6e8e9a" stroke-dasharray="3 3" stroke-dashoffset="1"/><path d="M453.5 4V56" stroke="#6e8e9a" stroke-dasharray="3 3" stroke-dashoffset="1"/><path d="M485.5 4V56" stroke="#6e8e9a" stroke-dasharray="3 3" stroke-dashoffset="1"/><path d="M517.5 4V56" stroke="#6e8e9a" stroke-dasharray="3 3" stroke-dashoffset="1"/><path d="M549.5 4V56" stroke="#6e8e9a" stroke-dasharray="3 3" stroke-dashoffset="1"/><path d="M581.5 4V56" stroke="#6e8e9a" stroke-dasharray="3 3" stroke-dashoffset="1"/><path d="M613.5 4V56" stroke="#6e8e9a" stroke-dasharray="3 3" stroke-dashoffset="1"/><path d="M645.5 4V56" stroke="#6e8e9a" stroke-dasharray="3 3" stroke-dashoffset="1"/><path d="M5 25.500H655" stroke="#6e8e9a" stroke-dasharray="3 3"/><path d="M5.5 24.0V52.0" stroke="#00ff00"/><rect x="3.5" y="27.0" width="4" height="19.4" fill="#000" stroke="#00ff00"/><path d="M13.5 17.4V33.0" stroke="#00ff00"/><path d="M11.5 27H16.5" stroke="#00ff00" stroke-width="2"/><path d="M21.5 20.3V43.5" stroke="#00ff00"/><rect x="19.5" y="26.1" width="4" height="11.6" fill="#fff" stroke="#00ff00"/><path d="M29.5 29.0V43.5" stroke="#00ff00"/><rect x="27.5" y="32.9" width="4" height="4.8" fill="#000" stroke="#00ff00"/><path d="M37.5 32.9V48.4" stroke="#00ff00"/><rect x="35.5" y="34.8" width="4" height="9.7" fill="#fff" stroke="#00ff00"/><path d="M45.5 42.6V56.0" stroke="#00ff00"/><rect x="43.5" y="44.5" width="4" height="8.7" fill="#fff" stroke="#00ff00"/><path d="M53.5 49.4V58.0" stroke="#00ff00"/><rect x="51.5" y="53.0" width="4" height="7.0" fill="#fff" stroke="#00ff00"/><path d="M61.5 33.9V58.0" stroke="#00ff00"/><rect x="59.5" y="37.7" width="4" height="15.5" fill="#000" stroke="#00ff00"/><path d="M69.5 27.0V46.4" stroke="#00ff00"/><rect x="67.5" y="31.0" width="4" height="6.7" fill="#000" stroke="#00ff00"/><path d="M77.5 22.2V46.4" stroke="#00ff00"/><rect x="75.5" y="29.0" width="4" height="5.8" fill="#fff" stroke="#00ff00"/><path d="M85.5 31.0V58.0" stroke="#00ff00"/><rect x="83.5" y="35.8" width="4" height="9.7" fill="#fff" stroke="#00ff00"/><path d="M93.5 43.5V58.0" stroke="#00ff00"/><rect x="91.5" y="44.5" width="4" height="8.7" fill="#fff" stroke="#00ff00"/><path d="M101.5 51.0V58.0" stroke="#00ff00"/><rect x="99.5" y="53.0" width="4" height="7.0" fill="#fff" stroke="#00ff00"/><path d="M141.5 51.3V58.0" stroke="#00ff00"/><path d="M165.5 53.5V58.0" stroke="#00ff00"/><polyline fill="none" stroke="#ff0000" stroke-width="1.05" points="5.0,45.5 13.5,39.7 21.7,35.8 29.4,32.3 37.6,35.8 45.5,41.6 53.5,45.5 61.4,47.4 69.3,43.5 77.3,39.1 85.2,37.7 93.4,42.6 101.3,51.3 105.5,56.0"/><polyline fill="none" stroke="#0000ff" stroke-width="1.05" points="10.0,56.0 13.5,54.2 21.7,50.3 29.4,46.8 37.6,44.5 45.5,43.2 53.5,42.2 61.4,39.7 69.3,38.3 77.3,39.1 85.2,41.0 93.4,44.1 101.3,47.4 109.3,49.4 117.2,51.3 125.4,52.7 133.3,54.2 139.0,56.0"/><polyline fill="none" stroke="#00e0e0" stroke-width="1.05" points="58.0,56.0 61.4,54.2 69.3,50.7 77.3,48.4 85.2,47.0 93.4,46.1 101.3,45.9 109.3,46.1 117.2,46.4 125.4,47.4 133.3,48.8 141.4,50.7 152.1,54.2 155.0,56.0"/><path d="M44.0 13.5H47.0M45.5 12.0V15.0" stroke="#ffff00"/><path d="M52.0 14.5H55.0M53.5 13.0V16.0" stroke="#ffff00"/><path d="M60.0 15.5H63.0M61.5 14.0V17.0" stroke="#ffff00"/><path d="M68.0 16.5H71.0M69.5 15.0V18.0" stroke="#ffff00"/><path d="M76.0 17.5H79.0M77.5 16.0V19.0" stroke="#ffff00"/><path d="M84.0 18.5H87.0M85.5 17.0V20.0" stroke="#ffff00"/><path d="M92.0 19.5H95.0M93.5 18.0V21.0" stroke="#ffff00"/><path d="M100.0 20.5H103.0M101.5 19.0V22.0" stroke="#ffff00"/><path d="M108.0 22.5H111.0M109.5 21.0V24.0" stroke="#ffff00"/><path d="M116.0 24.5H119.0M117.5 23.0V26.0" stroke="#ffff00"/><path d="M124.0 27.5H127.0M125.5 26.0V29.0" stroke="#ffff00"/><path d="M132.0 30.5H135.0M133.5 29.0V32.0" stroke="#ffff00"/><path d="M140.0 34.5H143.0M141.5 33.0V36.0" stroke="#ffff00"/><path d="M148.0 38.5H151.0M149.5 37.0V40.0" stroke="#ffff00"/><path d="M156.0 45.5H159.0M157.5 44.0V47.0" stroke="#ffff00"/><path d="M164.0 53.5H167.0M165.5 52.0V55.0" stroke="#ffff00"/><rect x="2" y="3" width="2" height="53" fill="#284848"/><path d="M4.500 56V3.500H655.500V56" fill="none" stroke="#fff"/><path d="M656 25.500H658" stroke="#fff"/></svg>
<div class="t " style="left:289.4px;top:194px;letter-spacing:-0.099px;font-size:10px;color:#fff">AUDCAD,H1</div>
<div class="t " style="left:352.2px;top:194px;letter-spacing:-0.365px;font-size:10px;color:#fff">0.8673 0.8682 0.8669 0.8677</div>
<div class="t " style="left:941.1px;top:206px;letter-spacing:-0.111px;font-size:9.5px;color:#fff">0.8755</div>
<div class="a " style="left:942px;top:240px;width:30px;height:2px;overflow:hidden"><div class="t" style="left:0;top:-1px;color:#fff;font-size:10.5px">0.8711</div></div>
<div class="a" style="left:210px;top:244px;width:818px;height:1px;background:#000"></div>
<div class="a" style="left:209px;top:244px;width:1px;height:19px;background:#808080"></div>
<div class="a" style="left:210px;top:244px;width:1px;height:20px;background:#404040"></div>
<div class="a " style="left:481px;top:244px;width:80px;height:19px;background:#f8f8f8;border:1px solid #000;border-top:none;border-right:2px solid #000"></div>
<div class="t g" style="left:221.8px;top:247px;letter-spacing:-0.532px;">EURUSD,Daily</div>
<div class="t g" style="left:310.0px;top:247px;letter-spacing:-0.506px;">EURUSD,Weekly</div>
<div class="t g" style="left:410.9px;top:247px;letter-spacing:-0.811px;">EURUSD,M1</div>
<div class="t " style="left:490.4px;top:247px;letter-spacing:-0.671px;">AUDCAD,H1</div>
<div class="a" style="left:301px;top:247px;width:1px;height:12px;background:#404040"></div>
<div class="a" style="left:401px;top:247px;width:1px;height:12px;background:#404040"></div>
<svg class="a" style="left:1000px;top:250px" width="4" height="7" viewBox="0 0 4 7" ><path d="M4 0V7L0 3.500Z" fill="#a0a0a0"/></svg>
<svg class="a" style="left:1017px;top:250px" width="4" height="7" viewBox="0 0 4 7" ><path d="M0 0V7L4 3.500Z" fill="#a0a0a0"/></svg>
<div class="a" style="left:4px;top:263px;width:206px;height:1px;background:#808080"></div>
<div class="a" style="left:4px;top:264px;width:1024px;height:1px;background:#fff"></div>
<svg class="a" style="left:8px;top:271px" width="6" height="5" viewBox="0 0 6 5" ><path d="M0 0h2v1h-2zM4 0h2v1h-2zM1 1h4v1h-4zM2 2h2v1h-2zM1 3h4v1h-4zM0 4h2v1h-2zM4 4h2v1h-2z" fill="#000" shape-rendering="crispEdges"/></svg>
<div class="a" style="left:4px;top:265px;width:1px;height:455px;background:#fff"></div>
<div class="a " style="left:5px;top:282px;width:13px;height:438px;background:linear-gradient(180deg,#a6caf0 0%,#0a246a 100%)"></div>
<div class="t" style="left:6px;top:717px;width:60px;transform-origin:0 0;transform:rotate(-90deg);color:#fff;letter-spacing:.1px">Терминал</div>
<div class="a" style="left:19px;top:268px;width:1px;height:452px;background:#808080"></div>
<div class="a" style="left:19px;top:268px;width:1007px;height:1px;background:#808080"></div>
<div class="a" style="left:1024px;top:268px;width:1px;height:452px;background:#e6e4de"></div>
<div class="a" style="left:1025px;top:268px;width:1px;height:452px;background:#fff"></div>
<div class="a" style="left:1026px;top:268px;width:1px;height:452px;background:#e4e2dc"></div>
<div class="a" style="left:4px;top:719px;width:1022px;height:1px;background:#fff"></div>
<div class="a " style="left:20px;top:269px;width:1004px;height:430px;background:#f8f8f8"></div>
<div class="a hd" style="left:20px;top:269px;width:89px;height:17px;"></div>
<div class="t " style="left:25.0px;top:272px;letter-spacing:0.031px;">Ордер</div>
<div class="a hd" style="left:109px;top:269px;width:151px;height:17px;"></div>
<div class="t " style="left:222.8px;top:272px;letter-spacing:-0.548px;">Время</div>
<div class="a hd" style="left:260px;top:269px;width:68px;height:17px;"></div>
<div class="t " style="left:304.1px;top:272px;letter-spacing:-0.418px;">Тип</div>
<div class="a hd" style="left:328px;top:269px;width:55px;height:17px;"></div>
<div class="t " style="left:343.0px;top:272px;letter-spacing:-0.237px;">Объём</div>
<div class="a hd" style="left:383px;top:269px;width:68px;height:17px;"></div>
<div class="t " style="left:407.1px;top:272px;letter-spacing:-0.393px;">Символ</div>
<div class="a hd" style="left:451px;top:269px;width:68px;height:17px;"></div>
<div class="t " style="left:485.9px;top:272px;letter-spacing:0.151px;">Цена</div>
<div class="a hd" style="left:519px;top:269px;width:68px;height:17px;"></div>
<div class="t " style="left:559.1px;top:272px;letter-spacing:-0.281px;">S / L</div>
<div class="a hd" style="left:587px;top:269px;width:68px;height:17px;"></div>
<div class="t " style="left:626.6px;top:272px;letter-spacing:-0.256px;">T / P</div>
<div class="a hd" style="left:655px;top:269px;width:151px;height:17px;"></div>
<div class="t " style="left:768.7px;top:272px;letter-spacing:-0.548px;">Время</div>
<div class="a hd" style="left:806px;top:269px;width:68px;height:17px;"></div>
<div class="t " style="left:841.0px;top:272px;letter-spacing:0.184px;">Цена</div>
<div class="a hd" style="left:874px;top:269px;width:68px;height:17px;"></div>
<div class="t " style="left:909.9px;top:272px;letter-spacing:0.054px;">Своп</div>
<div class="a hd" style="left:942px;top:269px;width:82px;height:17px;"></div>
<div class="t " style="left:972.2px;top:272px;letter-spacing:-0.221px;">Прибыль</div>
<svg class="a" style="left:71px;top:273px" width="9" height="8" viewBox="0 0 9 8" ><path d="M4.500 0.500L8.500 7.500H0.500Z" fill="#d0d0c8" stroke="#fff"/><path d="M4.500 0.500L0.500 7.500" stroke="#b0aca4" fill="none"/></svg>
<div class="a" style="left:20px;top:308px;width:1004px;height:1px;background:#c8c8c8"></div>
<svg class="a" style="left:23px;top:291px" width="15" height="16" viewBox="0 0 15 16" ><path d="M0.500 0.500H7L10.500 4V13.500H0.500Z" fill="#fcfcfc" stroke="#606060"/><path d="M7 0.500V4H10.500" fill="#e4e4e4" stroke="#606060"/><path d="M1.500 12.500L9.500 5V12.500Z" fill="#e8e8e8"/><circle cx="10.500" cy="11.500" r="3.300" fill="#f04010" stroke="#b02808" stroke-width=".7"/><circle cx="9.600" cy="10.500" r="1" fill="#ffb090"/></svg>
<div class="t " style="left:43.0px;top:292px;letter-spacing:-0.163px;">17412076</div>
<div class="t " style="left:167.9px;top:292px;letter-spacing:0.185px;">2007.11.19 10:06</div>
<div class="t " style="right:708px;top:292px;">sell</div>
<div class="t " style="right:654.5px;top:292px;">0.01</div>
<div class="t " style="right:586px;top:292px;">gbpusd</div>
<div class="t " style="right:517px;top:292px;">2.0467</div>
<div class="t " style="right:449px;top:292px;">2.0880</div>
<div class="t " style="right:381px;top:292px;">2.0395</div>
<div class="t " style="left:713.9px;top:292px;letter-spacing:0.185px;">2007.11.23 20:46</div>
<div class="t " style="right:162px;top:292px;">2.0605</div>
<div class="t " style="right:94px;top:292px;">-0.65</div>
<div class="t " style="right:13px;top:292px;">-13.80</div>
<div class="a " style="left:20px;top:309px;width:1004px;height:19px;background:#e8e8e8"></div>
<div class="a" style="left:20px;top:328px;width:1004px;height:1px;background:#c8c8c8"></div>
<svg class="a" style="left:23px;top:311px" width="15" height="16" viewBox="0 0 15 16" ><path d="M0.500 0.500H7L10.500 4V13.500H0.500Z" fill="#fcfcfc" stroke="#606060"/><path d="M7 0.500V4H10.500" fill="#e4e4e4" stroke="#606060"/><path d="M1.500 12.500L9.500 5V12.500Z" fill="#e8e8e8"/><circle cx="10.500" cy="11.500" r="3.300" fill="#2898f0" stroke="#1060b0" stroke-width=".7"/><circle cx="9.600" cy="10.500" r="1" fill="#a0dcff"/></svg>
<div class="t " style="left:43.0px;top:312px;letter-spacing:-0.163px;">17412478</div>
<div class="t " style="left:167.9px;top:312px;letter-spacing:0.185px;">2007.11.20 08:41</div>
<div class="t " style="right:708px;top:312px;">buy</div>
<div class="t " style="right:654.5px;top:312px;">0.01</div>
<div class="t " style="right:586px;top:312px;">eurusd</div>
<div class="t " style="right:517px;top:312px;">1.4735</div>
<div class="t " style="right:449px;top:312px;">1.4515</div>
<div class="t " style="right:381px;top:312px;">1.4870</div>
<div class="t " style="left:713.9px;top:312px;letter-spacing:0.185px;">2007.11.22 03:05</div>
<div class="t " style="right:162px;top:312px;">1.4857</div>
<div class="t " style="right:94px;top:312px;">-0.21</div>
<div class="t " style="right:13px;top:312px;">12.20</div>
<div class="a" style="left:20px;top:348px;width:1004px;height:1px;background:#c8c8c8"></div>
<div class="a " style="left:519px;top:329px;width:65px;height:18px;background:#f8a0a0"></div>
<svg class="a" style="left:23px;top:331px" width="15" height="16" viewBox="0 0 15 16" ><path d="M0.500 0.500H7L10.500 4V13.500H0.500Z" fill="#fcfcfc" stroke="#606060"/><path d="M7 0.500V4H10.500" fill="#e4e4e4" stroke="#606060"/><path d="M1.500 12.500L9.500 5V12.500Z" fill="#e8e8e8"/><circle cx="10.500" cy="11.500" r="3.300" fill="#2898f0" stroke="#1060b0" stroke-width=".7"/><circle cx="9.600" cy="10.500" r="1" fill="#a0dcff"/></svg>
<div class="t " style="left:43.0px;top:332px;letter-spacing:-0.163px;">17412498</div>
<div class="t " style="left:167.9px;top:332px;letter-spacing:0.240px;">2007.11.19 11:01</div>
<div class="t " style="right:708px;top:332px;">buy</div>
<div class="t " style="right:654.5px;top:332px;">0.01</div>
<div class="t " style="right:586px;top:332px;">eurjpy</div>
<div class="t " style="right:517px;top:332px;">161.50</div>
<div class="t " style="right:449px;top:332px;">161.55</div>
<div class="t " style="right:381px;top:332px;">165.30</div>
<div class="t " style="left:713.9px;top:332px;letter-spacing:0.185px;">2007.11.21 07:12</div>
<div class="t " style="right:162px;top:332px;">161.55</div>
<div class="t " style="right:94px;top:332px;">0.22</div>
<div class="t " style="right:13px;top:332px;">0.46</div>
<div class="a " style="left:20px;top:349px;width:1004px;height:19px;background:#e8e8e8"></div>
<div class="a" style="left:20px;top:368px;width:1004px;height:1px;background:#c8c8c8"></div>
<svg class="a" style="left:23px;top:351px" width="15" height="16" viewBox="0 0 15 16" ><path d="M0.500 0.500H7L10.500 4V13.500H0.500Z" fill="#fcfcfc" stroke="#606060"/><path d="M7 0.500V4H10.500" fill="#e4e4e4" stroke="#606060"/><path d="M1.500 12.500L9.500 5V12.500Z" fill="#e8e8e8"/><circle cx="10.500" cy="11.500" r="3.300" fill="#2898f0" stroke="#1060b0" stroke-width=".7"/><circle cx="9.600" cy="10.500" r="1" fill="#a0dcff"/></svg>
<div class="t " style="left:43.0px;top:352px;letter-spacing:-0.163px;">17412537</div>
<div class="t " style="left:167.9px;top:352px;letter-spacing:0.185px;">2007.11.19 10:17</div>
<div class="t " style="right:708px;top:352px;">buy stop</div>
<div class="t " style="right:654.5px;top:352px;">0.01</div>
<div class="t " style="right:586px;top:352px;">usdjpy</div>
<div class="t " style="right:517px;top:352px;">111.85</div>
<div class="t " style="right:449px;top:352px;">109.05</div>
<div class="t " style="right:381px;top:352px;">116.30</div>
<div class="t " style="left:713.9px;top:352px;letter-spacing:0.185px;">2007.11.23 22:16</div>
<div class="t " style="right:162px;top:352px;">108.37</div>
<div class="t " style="right:94px;top:352px;">0.00</div>
<div class="a" style="left:20px;top:388px;width:1004px;height:1px;background:#c8c8c8"></div>
<svg class="a" style="left:23px;top:371px" width="15" height="16" viewBox="0 0 15 16" ><path d="M0.500 0.500H7L10.500 4V13.500H0.500Z" fill="#fcfcfc" stroke="#606060"/><path d="M7 0.500V4H10.500" fill="#e4e4e4" stroke="#606060"/><path d="M1.500 12.500L9.500 5V12.500Z" fill="#e8e8e8"/><circle cx="10.500" cy="11.500" r="3.300" fill="#f04010" stroke="#b02808" stroke-width=".7"/><circle cx="9.600" cy="10.500" r="1" fill="#ffb090"/></svg>
<div class="t " style="left:43.0px;top:372px;letter-spacing:-0.163px;">17412635</div>
<div class="t " style="left:167.9px;top:372px;letter-spacing:0.185px;">2007.11.19 10:20</div>
<div class="t " style="right:708px;top:372px;">sell</div>
<div class="t " style="right:654.5px;top:372px;">0.01</div>
<div class="t " style="right:586px;top:372px;">audusd</div>
<div class="t " style="right:517px;top:372px;">0.8919</div>
<div class="t " style="right:449px;top:372px;">0.9105</div>
<div class="t " style="right:381px;top:372px;">0.8795</div>
<div class="t " style="left:713.9px;top:372px;letter-spacing:0.185px;">2007.11.19 10:26</div>
<div class="t " style="right:162px;top:372px;">0.8918</div>
<div class="t " style="right:94px;top:372px;">0.00</div>
<div class="t " style="right:13px;top:372px;">0.10</div>
<div class="a " style="left:20px;top:389px;width:1004px;height:19px;background:#e8e8e8"></div>
<div class="a" style="left:20px;top:408px;width:1004px;height:1px;background:#c8c8c8"></div>
<svg class="a" style="left:23px;top:391px" width="15" height="16" viewBox="0 0 15 16" ><path d="M0.500 0.500H7L10.500 4V13.500H0.500Z" fill="#fcfcfc" stroke="#606060"/><path d="M7 0.500V4H10.500" fill="#e4e4e4" stroke="#606060"/><path d="M1.500 12.500L9.500 5V12.500Z" fill="#e8e8e8"/><circle cx="10.500" cy="11.500" r="3.300" fill="#2898f0" stroke="#1060b0" stroke-width=".7"/><circle cx="9.600" cy="10.500" r="1" fill="#a0dcff"/></svg>
<div class="t " style="left:43.0px;top:392px;letter-spacing:-0.163px;">17412684</div>
<div class="t " style="left:167.9px;top:392px;letter-spacing:0.185px;">2007.11.19 10:22</div>
<div class="t " style="right:708px;top:392px;">buy</div>
<div class="t " style="right:654.5px;top:392px;">0.01</div>
<div class="t " style="right:586px;top:392px;">nzdusd</div>
<div class="t " style="right:517px;top:392px;">0.7604</div>
<div class="t " style="right:449px;top:392px;">0.7430</div>
<div class="t " style="right:381px;top:392px;">0.7810</div>
<div class="t " style="left:713.9px;top:392px;letter-spacing:0.185px;">2007.11.23 21:45</div>
<div class="t " style="right:162px;top:392px;">0.7577</div>
<div class="t " style="right:94px;top:392px;">0.40</div>
<div class="t " style="right:13px;top:392px;">-2.70</div>
<div class="a" style="left:20px;top:428px;width:1004px;height:1px;background:#c8c8c8"></div>
<svg class="a" style="left:23px;top:411px" width="15" height="16" viewBox="0 0 15 16" ><path d="M0.500 0.500H7L10.500 4V13.500H0.500Z" fill="#fcfcfc" stroke="#606060"/><path d="M7 0.500V4H10.500" fill="#e4e4e4" stroke="#606060"/><path d="M1.500 12.500L9.500 5V12.500Z" fill="#e8e8e8"/><circle cx="10.500" cy="11.500" r="3.300" fill="#2898f0" stroke="#1060b0" stroke-width=".7"/><circle cx="9.600" cy="10.500" r="1" fill="#a0dcff"/></svg>
<div class="t " style="left:43.0px;top:412px;letter-spacing:-0.163px;">17412765</div>
<div class="t " style="left:167.9px;top:412px;letter-spacing:0.185px;">2007.11.19 10:24</div>
<div class="t " style="right:708px;top:412px;">buy</div>
<div class="t " style="right:654.5px;top:412px;">0.01</div>
<div class="t " style="right:586px;top:412px;">chfjpy</div>
<div class="t " style="right:517px;top:412px;">98.89</div>
<div class="t " style="right:449px;top:412px;">96.70</div>
<div class="t " style="right:381px;top:412px;">100.60</div>
<div class="t " style="left:713.9px;top:412px;letter-spacing:0.185px;">2007.11.23 20:59</div>
<div class="t " style="right:162px;top:412px;">98.12</div>
<div class="t " style="right:94px;top:412px;">0.12</div>
<div class="t " style="right:13px;top:412px;">-7.12</div>
<div class="a " style="left:20px;top:429px;width:1004px;height:19px;background:#e8e8e8"></div>
<div class="a" style="left:20px;top:448px;width:1004px;height:1px;background:#c8c8c8"></div>
<svg class="a" style="left:23px;top:431px" width="15" height="16" viewBox="0 0 15 16" ><path d="M0.500 0.500H7L10.500 4V13.500H0.500Z" fill="#fcfcfc" stroke="#606060"/><path d="M7 0.500V4H10.500" fill="#e4e4e4" stroke="#606060"/><path d="M1.500 12.500L9.500 5V12.500Z" fill="#e8e8e8"/><circle cx="10.500" cy="11.500" r="3.300" fill="#2898f0" stroke="#1060b0" stroke-width=".7"/><circle cx="9.600" cy="10.500" r="1" fill="#a0dcff"/></svg>
<div class="t " style="left:43.0px;top:432px;letter-spacing:-0.163px;">17412998</div>
<div class="t " style="left:167.9px;top:432px;letter-spacing:0.185px;">2007.11.19 10:30</div>
<div class="t " style="right:708px;top:432px;">buy</div>
<div class="t " style="right:654.5px;top:432px;">0.01</div>
<div class="t " style="right:586px;top:432px;">audcad</div>
<div class="t " style="right:517px;top:432px;">0.8677</div>
<div class="t " style="right:449px;top:432px;">0.8415</div>
<div class="t " style="right:381px;top:432px;">0.8780</div>
<div class="t " style="left:713.9px;top:432px;letter-spacing:0.185px;">2007.11.23 20:47</div>
<div class="t " style="right:162px;top:432px;">0.8649</div>
<div class="t " style="right:94px;top:432px;">0.19</div>
<div class="t " style="right:13px;top:432px;">-2.83</div>
<div class="a" style="left:20px;top:468px;width:1004px;height:1px;background:#c8c8c8"></div>
<div class="a " style="left:519px;top:449px;width:65px;height:18px;background:#f8a0a0"></div>
<svg class="a" style="left:23px;top:451px" width="15" height="16" viewBox="0 0 15 16" ><path d="M0.500 0.500H7L10.500 4V13.500H0.500Z" fill="#fcfcfc" stroke="#606060"/><path d="M7 0.500V4H10.500" fill="#e4e4e4" stroke="#606060"/><path d="M1.500 12.500L9.500 5V12.500Z" fill="#e8e8e8"/><circle cx="10.500" cy="11.500" r="3.300" fill="#2898f0" stroke="#1060b0" stroke-width=".7"/><circle cx="9.600" cy="10.500" r="1" fill="#a0dcff"/></svg>
<div class="t " style="left:43.0px;top:452px;letter-spacing:-0.163px;">17413175</div>
<div class="t " style="left:167.9px;top:452px;letter-spacing:0.185px;">2007.11.19 10:34</div>
<div class="t " style="right:708px;top:452px;">buy</div>
<div class="t " style="right:654.5px;top:452px;">0.01</div>
<div class="t " style="right:586px;top:452px;">nzdchf</div>
<div class="t " style="right:517px;top:452px;">0.8511</div>
<div class="t " style="right:449px;top:452px;">0.8365</div>
<div class="t " style="right:381px;top:452px;">0.8665</div>
<div class="t " style="left:713.9px;top:452px;letter-spacing:0.185px;">2007.11.19 23:31</div>
<div class="t " style="right:162px;top:452px;">0.8365</div>
<div class="t " style="right:94px;top:452px;">0.00</div>
<div class="t " style="right:13px;top:452px;">-13.10</div>
<div class="a " style="left:20px;top:469px;width:1004px;height:19px;background:#e8e8e8"></div>
<div class="a" style="left:20px;top:488px;width:1004px;height:1px;background:#c8c8c8"></div>
<svg class="a" style="left:23px;top:471px" width="15" height="16" viewBox="0 0 15 16" ><path d="M0.500 0.500H7L10.500 4V13.500H0.500Z" fill="#fcfcfc" stroke="#606060"/><path d="M7 0.500V4H10.500" fill="#e4e4e4" stroke="#606060"/><path d="M1.500 12.500L9.500 5V12.500Z" fill="#e8e8e8"/><circle cx="10.500" cy="11.500" r="3.300" fill="#2898f0" stroke="#1060b0" stroke-width=".7"/><circle cx="9.600" cy="10.500" r="1" fill="#a0dcff"/></svg>
<div class="t " style="left:43.0px;top:472px;letter-spacing:-0.163px;">17413305</div>
<div class="t " style="left:167.9px;top:472px;letter-spacing:0.185px;">2007.11.19 10:39</div>
<div class="t " style="right:708px;top:472px;">buy limit</div>
<div class="t " style="right:654.5px;top:472px;">0.01</div>
<div class="t " style="right:586px;top:472px;">usdcad</div>
<div class="t " style="right:517px;top:472px;">0.9580</div>
<div class="t " style="right:449px;top:472px;">0.9425</div>
<div class="t " style="right:381px;top:472px;">0.9960</div>
<div class="t " style="left:713.9px;top:472px;letter-spacing:0.185px;">2007.11.23 22:16</div>
<div class="t " style="right:162px;top:472px;">0.9895</div>
<div class="t " style="right:94px;top:472px;">0.00</div>
<div class="a" style="left:20px;top:508px;width:1004px;height:1px;background:#c8c8c8"></div>
<svg class="a" style="left:23px;top:491px" width="15" height="16" viewBox="0 0 15 16" ><path d="M0.500 0.500H7L10.500 4V13.500H0.500Z" fill="#fcfcfc" stroke="#606060"/><path d="M7 0.500V4H10.500" fill="#e4e4e4" stroke="#606060"/><path d="M1.500 12.500L9.500 5V12.500Z" fill="#e8e8e8"/><circle cx="10.500" cy="11.500" r="3.300" fill="#2898f0" stroke="#1060b0" stroke-width=".7"/><circle cx="9.600" cy="10.500" r="1" fill="#a0dcff"/></svg>
<div class="t " style="left:43.0px;top:492px;letter-spacing:-0.163px;">17413325</div>
<div class="t " style="left:167.9px;top:492px;letter-spacing:0.185px;">2007.11.19 10:39</div>
<div class="t " style="right:708px;top:492px;">buy limit</div>
<div class="t " style="right:654.5px;top:492px;">0.01</div>
<div class="t " style="right:586px;top:492px;">eurcad</div>
<div class="t " style="right:517px;top:492px;">1.3975</div>
<div class="t " style="right:449px;top:492px;">1.3801</div>
<div class="t " style="right:381px;top:492px;">1.4534</div>
<div class="t " style="left:713.9px;top:492px;letter-spacing:0.185px;">2007.11.23 22:15</div>
<div class="t " style="right:162px;top:492px;">1.4683</div>
<div class="t " style="right:94px;top:492px;">0.00</div>
<div class="a " style="left:20px;top:509px;width:1004px;height:19px;background:#e8e8e8"></div>
<div class="a" style="left:20px;top:528px;width:1004px;height:1px;background:#c8c8c8"></div>
<svg class="a" style="left:23px;top:511px" width="15" height="16" viewBox="0 0 15 16" ><path d="M0.500 0.500H7L10.500 4V13.500H0.500Z" fill="#fcfcfc" stroke="#606060"/><path d="M7 0.500V4H10.500" fill="#e4e4e4" stroke="#606060"/><path d="M1.500 12.500L9.500 5V12.500Z" fill="#e8e8e8"/><circle cx="10.500" cy="11.500" r="3.300" fill="#f04010" stroke="#b02808" stroke-width=".7"/><circle cx="9.600" cy="10.500" r="1" fill="#ffb090"/></svg>
<div class="t " style="left:43.0px;top:512px;letter-spacing:-0.163px;">17413352</div>
<div class="t " style="left:167.9px;top:512px;letter-spacing:0.185px;">2007.11.19 10:40</div>
<div class="t " style="right:708px;top:512px;">sell limit</div>
<div class="t " style="right:654.5px;top:512px;">0.01</div>
<div class="t " style="right:586px;top:512px;">gbpchf</div>
<div class="t " style="right:517px;top:512px;">2.3000</div>
<div class="t " style="right:449px;top:512px;">2.3470</div>
<div class="t " style="right:381px;top:512px;">2.2475</div>
<div class="t " style="left:713.9px;top:512px;letter-spacing:0.185px;">2007.11.23 22:13</div>
<div class="t " style="right:162px;top:512px;">2.2707</div>
<div class="t " style="right:94px;top:512px;">0.00</div>
<div class="a" style="left:20px;top:548px;width:1004px;height:1px;background:#c8c8c8"></div>
<svg class="a" style="left:23px;top:531px" width="15" height="16" viewBox="0 0 15 16" ><path d="M0.500 0.500H7L10.500 4V13.500H0.500Z" fill="#fcfcfc" stroke="#606060"/><path d="M7 0.500V4H10.500" fill="#e4e4e4" stroke="#606060"/><path d="M1.500 12.500L9.500 5V12.500Z" fill="#e8e8e8"/><circle cx="10.500" cy="11.500" r="3.300" fill="#2898f0" stroke="#1060b0" stroke-width=".7"/><circle cx="9.600" cy="10.500" r="1" fill="#a0dcff"/></svg>
<div class="t " style="left:43.0px;top:532px;letter-spacing:-0.163px;">17413375</div>
<div class="t " style="left:167.9px;top:532px;letter-spacing:0.185px;">2007.11.19 10:41</div>
<div class="t " style="right:708px;top:532px;">buy stop</div>
<div class="t " style="right:654.5px;top:532px;">0.01</div>
<div class="t " style="right:586px;top:532px;">nzdjpy</div>
<div class="t " style="right:517px;top:532px;">84.65</div>
<div class="t " style="right:449px;top:532px;">80.95</div>
<div class="t " style="right:381px;top:532px;">85.99</div>
<div class="t " style="left:713.9px;top:532px;letter-spacing:0.185px;">2007.11.23 22:13</div>
<div class="t " style="right:162px;top:532px;">82.26</div>
<div class="t " style="right:94px;top:532px;">0.00</div>
<div class="a" style="left:107px;top:289px;width:1px;height:259px;background:#c8c8c8"></div>
<div class="a" style="left:258px;top:289px;width:1px;height:259px;background:#c8c8c8"></div>
<div class="a" style="left:326px;top:289px;width:1px;height:259px;background:#c8c8c8"></div>
<div class="a" style="left:381px;top:289px;width:1px;height:259px;background:#c8c8c8"></div>
<div class="a" style="left:449px;top:289px;width:1px;height:259px;background:#c8c8c8"></div>
<div class="a" style="left:517px;top:289px;width:1px;height:259px;background:#c8c8c8"></div>
<div class="a" style="left:585px;top:289px;width:1px;height:259px;background:#c8c8c8"></div>
<div class="a" style="left:653px;top:289px;width:1px;height:259px;background:#c8c8c8"></div>
<div class="a" style="left:804px;top:289px;width:1px;height:259px;background:#c8c8c8"></div>
<div class="a" style="left:872px;top:289px;width:1px;height:259px;background:#c8c8c8"></div>
<div class="a" style="left:940px;top:289px;width:1px;height:259px;background:#c8c8c8"></div>
<div class="a" style="left:20px;top:288px;width:1004px;height:1px;background:#e8e8e8"></div>
<div class="a " style="left:20px;top:548px;width:1004px;height:20px;background:#c8c8c8"></div>
<svg class="a" style="left:26px;top:554px" width="8" height="8" viewBox="0 0 8 8" ><circle cx="4" cy="4" r="3" fill="#d8d8d8" stroke="#909090"/></svg>
<div class="t " style="left:42.0px;top:551px;letter-spacing:0.373px;font-weight:bold;">Прибыль: -26.72  Кредит: 0.00  Депозит: 0.00  Снятие: 0.00</div>
<div class="t " style="left:982.9px;top:551px;letter-spacing:1.002px;font-weight:bold;">-26.72</div>
<div class="a" style="left:20px;top:699px;width:1005px;height:1px;background:#000"></div>
<div class="a " style="left:20px;top:700px;width:1005px;height:19px;background:#d0d0c8"></div>
<div class="a " style="left:89px;top:699px;width:97px;height:18px;background:#f8f8f8;border:1px solid #000;border-top:none;border-right:2px solid #000"></div>
<div class="a " style="left:90px;top:699px;width:94px;height:1px;background:#f8f8f8"></div>
<div class="t g" style="left:31.5px;top:703px;letter-spacing:0.193px;">Торговля</div>
<div class="t " style="left:98.2px;top:702px;letter-spacing:0.013px;">История Счета</div>
<div class="t g" style="left:194.0px;top:703px;letter-spacing:0.020px;">Новости</div>
<div class="t g" style="left:255.9px;top:703px;letter-spacing:0.097px;">Сигналы</div>
<div class="t g" style="left:319.4px;top:703px;letter-spacing:0.270px;">Почтовый ящик</div>
<div class="t g" style="left:420.9px;top:703px;letter-spacing:0.209px;">Эксперты</div>
<div class="t g" style="left:491.9px;top:703px;letter-spacing:-0.088px;">Журнал</div>
<div class="a" style="left:248px;top:703px;width:1px;height:12px;background:#404040"></div>
<div class="a" style="left:311px;top:703px;width:1px;height:12px;background:#404040"></div>
<div class="a" style="left:412px;top:703px;width:1px;height:12px;background:#404040"></div>
<div class="a" style="left:482px;top:703px;width:1px;height:12px;background:#404040"></div>
<div class="a" style="left:542px;top:703px;width:1px;height:12px;background:#404040"></div>
<div class="a" style="left:4px;top:722px;width:1024px;height:1px;background:#808080"></div>
<div class="a" style="left:4px;top:723px;width:1024px;height:1px;background:#fff"></div>
<div class="a" style="left:4px;top:745px;width:1024px;height:1px;background:#fff"></div>
<div class="t " style="left:5.4px;top:729px;letter-spacing:-0.021px;">Для справки, нажмите F1</div>
<div class="a" style="left:307px;top:727px;width:1px;height:16px;background:#808080"></div>
<div class="a" style="left:308px;top:727px;width:1px;height:16px;background:#fff"></div>
<div class="a" style="left:416px;top:727px;width:1px;height:16px;background:#808080"></div>
<div class="a" style="left:417px;top:727px;width:1px;height:16px;background:#fff"></div>
<div class="a" style="left:517px;top:727px;width:1px;height:16px;background:#808080"></div>
<div class="a" style="left:518px;top:727px;width:1px;height:16px;background:#fff"></div>
<div class="a" style="left:588px;top:727px;width:1px;height:16px;background:#808080"></div>
<div class="a" style="left:589px;top:727px;width:1px;height:16px;background:#fff"></div>
<div class="a" style="left:659px;top:727px;width:1px;height:16px;background:#808080"></div>
<div class="a" style="left:660px;top:727px;width:1px;height:16px;background:#fff"></div>
<div class="a" style="left:729px;top:727px;width:1px;height:16px;background:#808080"></div>
<div class="a" style="left:730px;top:727px;width:1px;height:16px;background:#fff"></div>
<div class="a" style="left:800px;top:727px;width:1px;height:16px;background:#808080"></div>
<div class="a" style="left:801px;top:727px;width:1px;height:16px;background:#fff"></div>
<div class="a" style="left:866px;top:727px;width:1px;height:16px;background:#808080"></div>
<div class="a" style="left:867px;top:727px;width:1px;height:16px;background:#fff"></div>
<div class="t " style="left:311.7px;top:729px;letter-spacing:0.174px;">Default</div>
<div class="t " style="left:420.9px;top:729px;letter-spacing:0.159px;">2007.11.22 03:00</div>
<div class="t " style="left:521.4px;top:729px;letter-spacing:0.236px;">O: 0.8585</div>
<div class="t " style="left:594.4px;top:729px;letter-spacing:0.062px;">H: 0.8593</div>
<div class="t " style="left:665.4px;top:729px;letter-spacing:0.041px;">L: 0.8536</div>
<div class="t " style="left:734.4px;top:729px;letter-spacing:0.062px;">C: 0.8549</div>
<div class="t " style="left:805.4px;top:729px;letter-spacing:-0.039px;">V: 670</div>
<svg class="a" style="left:872px;top:729px" width="24" height="12" viewBox="0 0 24 12" shape-rendering="crispEdges"><rect x="0" y="0" width="2" height="10" fill="#6a9a10"/><rect x="0" y="11" width="2" height="1" fill="#103c70"/><rect x="3" y="0" width="2" height="9" fill="#6a9a10"/><rect x="3" y="10" width="2" height="2" fill="#103c70"/><rect x="6" y="0" width="2" height="8" fill="#6a9a10"/><rect x="6" y="9" width="2" height="3" fill="#103c70"/><rect x="9" y="0" width="2" height="7" fill="#6a9a10"/><rect x="9" y="8" width="2" height="4" fill="#103c70"/><rect x="12" y="0" width="2" height="6" fill="#6a9a10"/><rect x="12" y="7" width="2" height="5" fill="#103c70"/><rect x="15" y="0" width="2" height="5" fill="#6a9a10"/><rect x="15" y="6" width="2" height="6" fill="#103c70"/><rect x="18" y="0" width="2" height="4" fill="#6a9a10"/><rect x="18" y="5" width="2" height="7" fill="#103c70"/><rect x="21" y="0" width="2" height="3" fill="#6a9a10"/><rect x="21" y="4" width="2" height="8" fill="#103c70"/></svg>
<div class="t " style="left:931.9px;top:729px;letter-spacing:-0.000px;">138/3 kb</div>
<svg class="a" style="left:1012px;top:729px" width="16" height="15" viewBox="0 0 16 15" ><path d="M16 1L2 15M16 5L6 15M16 9L10 15M16 13L14 15" stroke="#fff" stroke-width="1"/><path d="M16 2.200L3.200 15M16 6.200L7.200 15M16 10.200L11.200 15" stroke="#808080" stroke-width="1.800"/></svg>
</body>
</html>
